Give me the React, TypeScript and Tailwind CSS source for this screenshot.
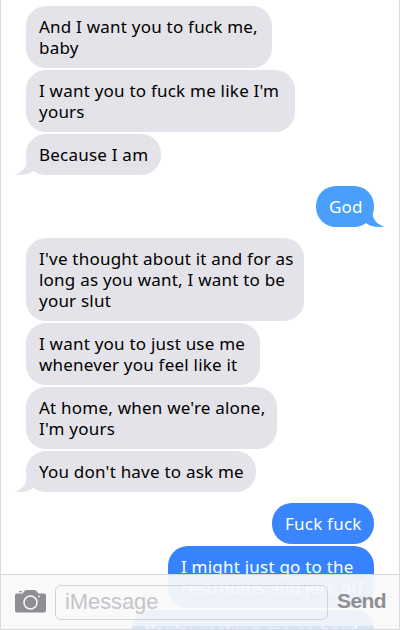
type Message = {
  from: "me" | "them";
  lines: string[];
  style: string;
  tail?: boolean;
};

const messages: Message[] = [
  { from: "them", lines: ["And I want you to fuck me,", "baby"], style: "w-[246px]" },
  { from: "them", lines: ["I want you to fuck me like I'm", "yours"], style: "w-[269px]" },
  { from: "them", lines: ["Because I am"], style: "w-[135px]", tail: true },
  { from: "me", lines: ["God"], style: "w-[58px] bg-[#499ffb] text-[#499ffb]", tail: true },
  { from: "them", lines: ["I've thought about it and for as", "long as you want, I want to be", "your slut"], style: "w-[278px]" },
  { from: "them", lines: ["I want you to just use me", "whenever you feel like it"], style: "w-[234px]" },
  { from: "them", lines: ["At home, when we're alone,", "I'm yours"], style: "w-[251px]" },
  { from: "them", lines: ["You don't have to ask me"], style: "w-[230px]", tail: true },
  { from: "me", lines: ["Fuck fuck"], style: "w-[102px] bg-[#3985fe]" },
  { from: "me", lines: ["I might just go to the", "restrooms and jerk off"], style: "w-[206px] bg-[#3783ff]" },
  { from: "me", lines: ["You're making me so hard"], style: "w-[242px] bg-[#3783ff]" },
];

const Tail = ({ mine }: { mine?: boolean }) => (
  <svg
    viewBox="0 0 24 22"
    className={`absolute bottom-0 h-[22px] w-6 ${mine ? "-right-[11px] -scale-x-100" : "-left-3"}`}
    fill="currentColor"
  >
    <path d="M12.500 0V8C12.500 14 8 20 0 21.500C8 22.500 15 21.500 19 18L24 15V0Z" />
  </svg>
);

function Bubble({ message }: { message: Message }) {
  const mine = message.from === "me";
  return (
    <div
      className={`relative rounded-[20px] py-2.5 pl-[13px] ${
        mine ? "self-end" : "bg-[#e4e3e9] text-[#e4e3e9]"
      } ${message.style}`}
    >
      {message.tail && <Tail mine={mine} />}
      <p
        className={`relative text-[17px] leading-[21px] tracking-[0.22px] whitespace-nowrap ${mine ? "text-white" : "text-black"}`}
      >
        {message.lines.map((line) => (
          <span key={line} className="block">
            {line}
          </span>
        ))}
      </p>
    </div>
  );
}

function Composer() {
  return (
    <div className="absolute inset-x-0 bottom-0 flex h-14 items-center border-y border-[#d8d8dc] bg-linear-to-b from-[#f9f9fa]/94 from-94% to-[#f7f7f8]/84 to-94% pl-[14px] font-['Liberation_Sans',sans-serif]">
      <svg viewBox="0 0 31 24" className="mb-0.5 h-6 w-[31px] shrink-0" fill="#8f8e94">
        <path d="M2 4.500H7.500L10 1.500Q10.500 1 12 1H19Q20.500 1 21 1.500L23.500 4.500H29Q31 4.500 31 6.500V21.500Q31 23.500 29 23.500H2Q0 23.500 0 21.500V6.500Q0 4.500 2 4.500Z" />
        <rect x="4" y="2" width="3" height="1.300" rx="0.500" />
        <circle cx="15.500" cy="13.500" r="6.500" fill="none" stroke="#f8f8f9" strokeWidth="1.500" />
        <circle cx="24" cy="7.500" r="0.900" fill="#f8f8f9" />
      </svg>
      <div className="ml-[9px] flex h-[35px] w-[273px] shrink-0 items-center rounded-md border border-[#d3d4da] pb-0.5 pl-[9px] text-[22px] tracking-[-0.1px] text-[#c5c5ca]">
        iMessage
      </div>
      <span className="ml-[9px] pb-0.5 text-[21px] font-bold tracking-[-0.6px] text-[#8f8e94]">Send</span>
    </div>
  );
}

export default function App() {
  return (
    <div className="relative h-[630px] w-[400px] overflow-hidden border-x border-[#dcdcde] bg-white font-['Noto_Sans',sans-serif]">
      <div className="flex flex-col gap-0.5 pt-1.5 pr-[25px] pl-[25px]">
        {messages.map((message, i) => (
          <div
            key={message.lines[0]}
            className={`flex flex-col ${i > 0 && messages[i - 1].from !== message.from ? "mt-[9px]" : ""}`}
          >
            <Bubble message={message} />
          </div>
        ))}
      </div>
      <Composer />
    </div>
  );
}
